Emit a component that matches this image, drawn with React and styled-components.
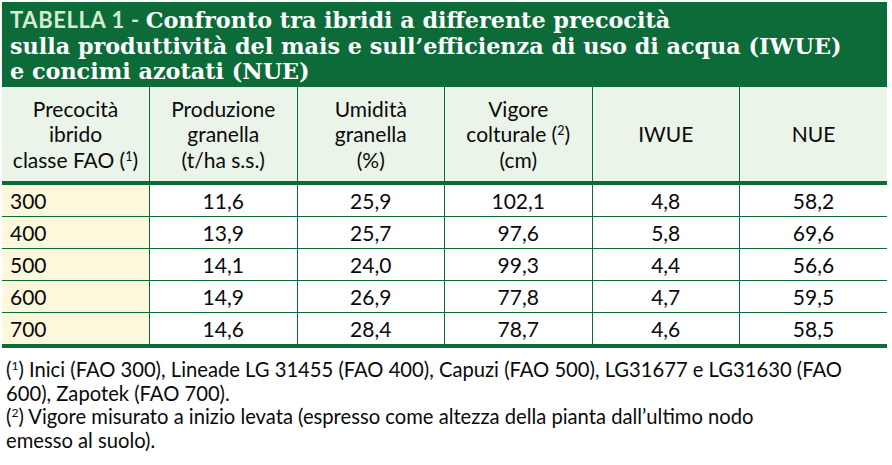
import React from "react";
import styled, { createGlobalStyle } from "styled-components";

const GREEN = "#0d6b39";

const GlobalStyle = createGlobalStyle`
  html, body {
    margin: 0;
    padding: 0;
    background: #ffffff;
  }
`;

const Page = styled.div`
  width: 885px;
  padding: 2px 0 0 2px;
  font-family: Lato, "Liberation Sans", sans-serif;
  color: #0a0a0a;
`;

const Title = styled.div`
  background: ${GREEN};
  color: #ffffff;
  height: 85px;
  box-sizing: border-box;
  padding: 5px 8px 0 8px;
  font-family: "DejaVu Serif", serif;
  font-weight: 700;
  font-size: 22.3px;
  line-height: 25.5px;
  white-space: nowrap;
`;

const Label = styled.span`
  font-family: Lato, "Liberation Sans", sans-serif;
  font-weight: 700;
  font-size: 22px;
  letter-spacing: 0.6px;
  color: #d6ebd2;
`;

const Table = styled.table`
  width: 100%;
  border-collapse: collapse;
  table-layout: fixed;
`;

const HeadCell = styled.th`
  background: #eaf4e9;
  font-weight: 400;
  font-size: 21px;
  line-height: 25.5px;
  height: 94px;
  padding: 0 4px;
  text-align: center;
  vertical-align: middle;
  border-left: 1.5px solid ${GREEN};
  border-bottom: 4px solid ${GREEN};
  &:first-child {
    border-left: none;
  }
`;

const Cell = styled.td`
  background: ${({ $first }) => ($first ? "#fdf8dc" : "#ffffff")};
  text-align: ${({ $first }) => ($first ? "left" : "center")};
  padding: ${({ $first }) => ($first ? "0 0 0 8px" : "0")};
  font-size: 21px;
  height: 31px;
  line-height: 31px;
  border-left: 1.5px solid ${GREEN};
  border-bottom: ${({ $last }) => ($last ? "4px" : "1px")} solid ${GREEN};
  &:first-child {
    border-left: none;
  }
`;

const Sup = styled.span`
  font-size: 0.6em;
  vertical-align: 0.55em;
  line-height: 0;
`;

const Notes = styled.div`
  padding: 10px 0 0 4px;
  font-size: 20.2px;
  line-height: 23.5px;
  white-space: nowrap;
`;

const headers = [
  ["Precocità", "ibrido", <>classe FAO (<Sup>1</Sup>)</>],
  ["Produzione", "granella", "(t/ha s.s.)"],
  ["Umidità", "granella", "(%)"],
  ["Vigore", <>colturale (<Sup>2</Sup>)</>, "(cm)"],
  ["IWUE"],
  ["NUE"],
];

const rows = [
  ["300", "11,6", "25,9", "102,1", "4,8", "58,2"],
  ["400", "13,9", "25,7", "97,6", "5,8", "69,6"],
  ["500", "14,1", "24,0", "99,3", "4,4", "56,6"],
  ["600", "14,9", "26,9", "77,8", "4,7", "59,5"],
  ["700", "14,6", "28,4", "78,7", "4,6", "58,5"],
];

export default function App() {
  return (
    <Page>
      <GlobalStyle />
      <Title>
        <Label>TABELLA 1 - </Label>Confronto tra ibridi a differente precocità
        <br />
        sulla produttività del mais e sull’efficienza di uso di acqua (IWUE)
        <br />e concimi azotati (NUE)
      </Title>
      <Table>
        <thead>
          <tr>
            {headers.map((lines, i) => (
              <HeadCell key={i}>
                {lines.map((line, j) => (
                  <div key={j}>{line}</div>
                ))}
              </HeadCell>
            ))}
          </tr>
        </thead>
        <tbody>
          {rows.map((row, r) => (
            <tr key={r}>
              {row.map((value, c) => (
                <Cell key={c} $first={c === 0} $last={r === rows.length - 1}>
                  {value}
                </Cell>
              ))}
            </tr>
          ))}
        </tbody>
      </Table>
      <Notes>
        (<Sup>1</Sup>) Inici (FAO 300), Lineade LG 31455 (FAO 400), Capuzi (FAO 500), LG31677 e LG31630 (FAO
        <br />
        600), Zapotek (FAO 700).
        <br />
        (<Sup>2</Sup>) Vigore misurato a inizio levata (espresso come altezza della pianta dall’ultimo nodo
        <br />
        emesso al suolo).
      </Notes>
    </Page>
  );
}
